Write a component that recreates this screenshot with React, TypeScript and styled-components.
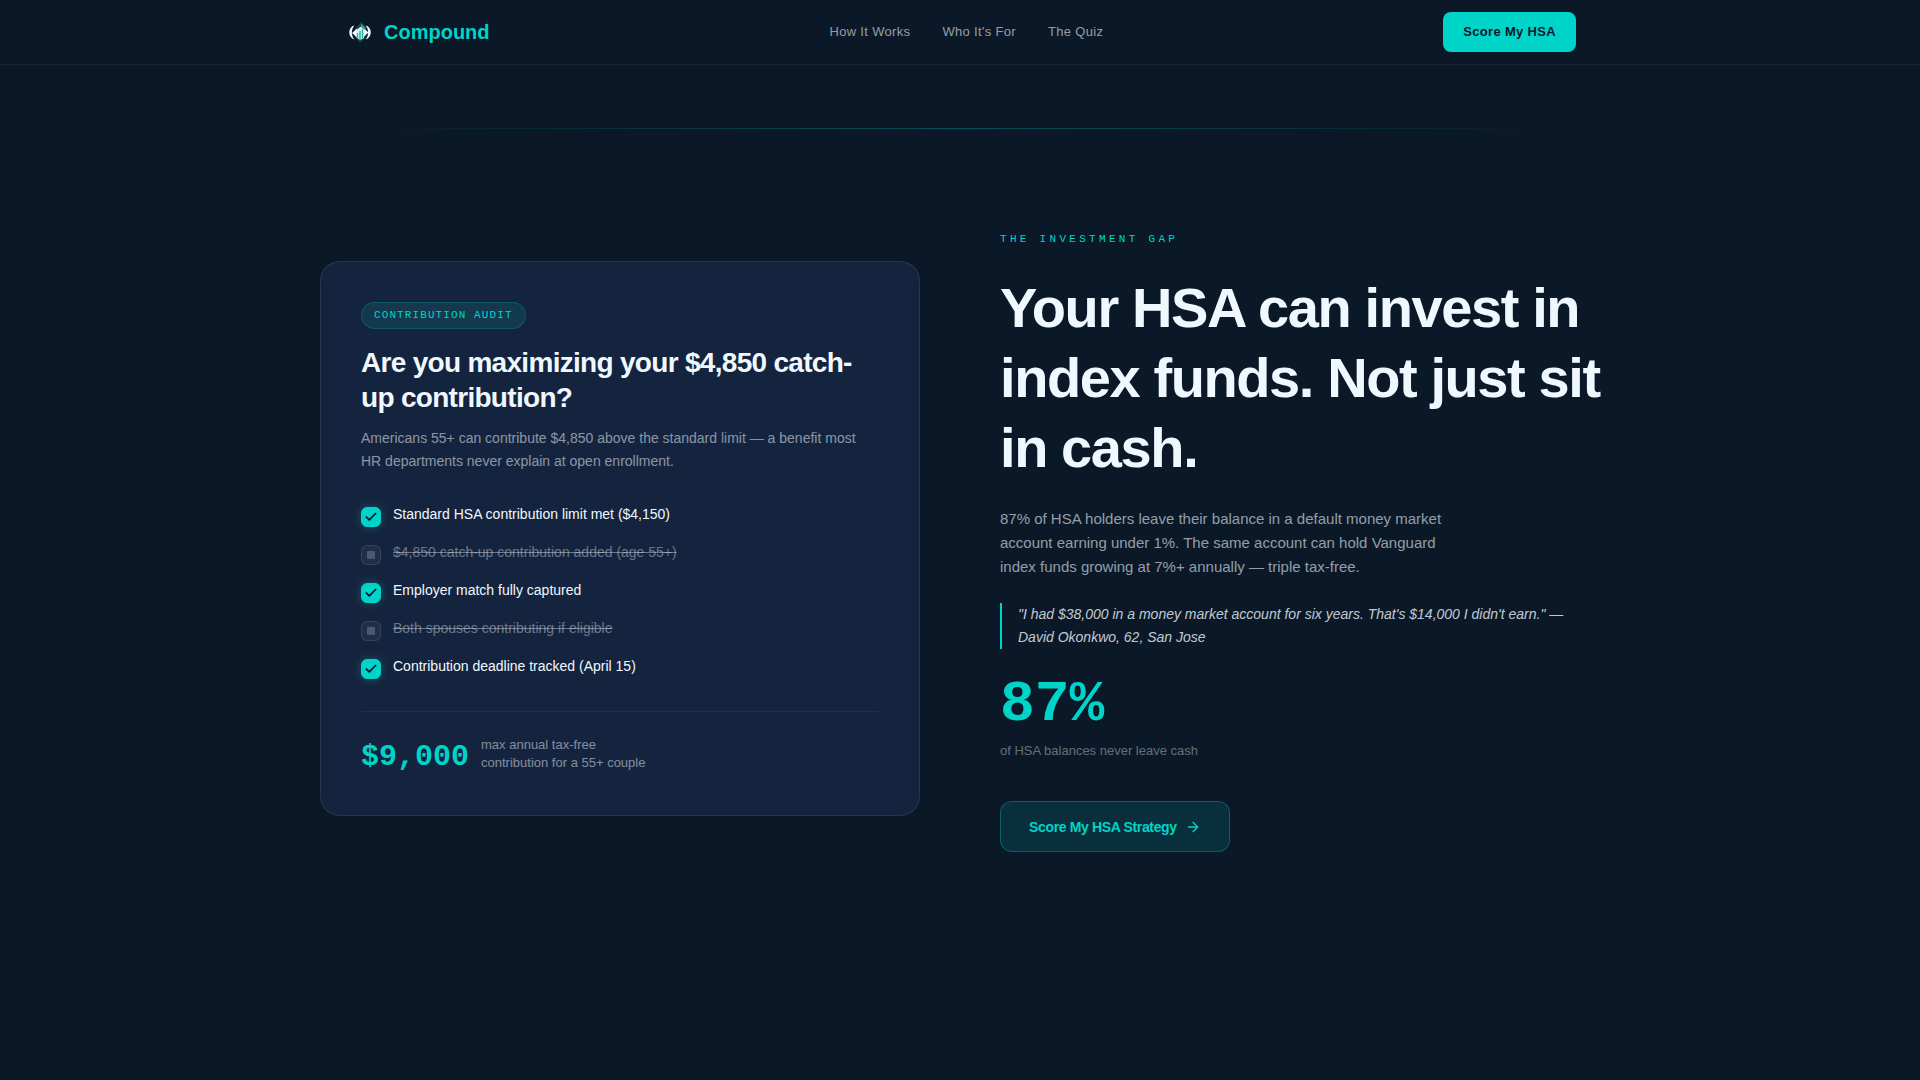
import React from "react";
import styled, { createGlobalStyle, css } from "styled-components";
import { ArrowRight, Check } from "lucide-react";

const color = {
  page: "#0a1828",
  card: "#15243e",
  teal: "#00d4c8",
  ink: "#f0f8ff",
};

const sans = '"Liberation Sans", Arial, sans-serif';
const mono = '"Liberation Mono", "Courier New", monospace';

const GlobalStyle = createGlobalStyle`
  *, *::before, *::after { box-sizing: border-box; }
  body {
    margin: 0;
    min-height: 100vh;
    background: ${color.page};
    color: ${color.ink};
    font-family: ${sans};
    -webkit-font-smoothing: antialiased;
  }
  h1, h2, p, ul, blockquote { margin: 0; padding: 0; }
`;

const Header = styled.header`
  border-bottom: 1px solid rgba(255, 255, 255, 0.06);
`;

const HeaderInner = styled.div`
  display: flex;
  align-items: center;
  justify-content: space-between;
  max-width: 1280px;
  height: 64px;
  margin: 0 auto;
  padding: 0 24px;
`;

const Brand = styled.a`
  display: flex;
  align-items: center;
  gap: 8px;
  color: ${color.teal};
  font-size: 20px;
  font-weight: 700;
  line-height: 32px;
  text-decoration: none;
`;

const Nav = styled.nav`
  display: flex;
  gap: 32px;
`;

const NavLink = styled.a`
  color: rgba(240, 248, 255, 0.6);
  font-size: 13px;
  line-height: 20px;
  letter-spacing: 0.025em;
  text-decoration: none;
`;

const HeaderButton = styled.button`
  height: 40px;
  padding: 0 20px;
  border: 0;
  border-radius: 8px;
  background: ${color.teal};
  color: ${color.page};
  font: 700 13px/20px ${sans};
  letter-spacing: 0.025em;
  cursor: pointer;
`;

const Divider = styled.hr`
  max-width: 1200px;
  height: 1px;
  margin: 63px auto 0;
  border: 0;
  background: linear-gradient(90deg, transparent, rgba(0, 212, 200, 0.3), transparent);
`;

const Section = styled.section`
  display: grid;
  grid-template-columns: 1fr 1fr;
  align-items: center;
  gap: 80px;
  max-width: 1280px;
  margin: 0 auto;
  padding: 96px 0;
`;

const Card = styled.article`
  padding: 40px;
  border: 1px solid rgba(255, 255, 255, 0.08);
  border-radius: 20px;
  background: ${color.card};
`;

const Badge = styled.span`
  display: inline-block;
  padding: 4px 12px;
  border: 1px solid rgba(0, 212, 200, 0.2);
  border-radius: 14px;
  background: rgba(0, 212, 200, 0.12);
  color: ${color.teal};
  font: 400 11px/17px ${mono};
  letter-spacing: 0.1em;
  text-transform: uppercase;
  vertical-align: top;
`;

const CardTitle = styled.h2`
  margin-top: 16px;
  font-size: 28px;
  font-weight: 700;
  line-height: 35px;
  letter-spacing: -0.025em;
`;

const CardText = styled.p`
  margin-top: 12px;
  color: rgba(240, 248, 255, 0.55);
  font-size: 14px;
  line-height: 23px;
`;

const List = styled.ul`
  display: flex;
  flex-direction: column;
  gap: 16px;
  margin-top: 32px;
  list-style: none;
`;

const Item = styled.label`
  display: flex;
  align-items: flex-start;
  gap: 12px;
`;

const Mark = styled.span`
  display: grid;
  place-items: center;
  margin-top: 2px;

  & > * {
    grid-area: 1 / 1;
  }

  svg {
    z-index: 1;
    pointer-events: none;
  }
`;

const Checkbox = styled.input`
  appearance: none;
  width: 20px;
  height: 20px;
  margin: 0;
  border: 1px solid rgba(255, 255, 255, 0.1);
  border-radius: 6px;
  background: rgba(255, 255, 255, 0.05);

  &:checked {
    border-color: ${color.teal};
    background: ${color.teal};
    box-shadow: 0 0 8px rgba(0, 212, 200, 0.3);
  }
`;

const ItemText = styled.span<{ $done: boolean }>`
  color: ${color.ink};
  font-size: 14px;
  line-height: 18px;
  ${(p) =>
    !p.$done &&
    css`
      color: rgba(240, 248, 255, 0.4);
      text-decoration: line-through;
    `}
`;

const CardFooter = styled.footer`
  display: flex;
  align-items: flex-start;
  gap: 12px;
  margin-top: 32px;
  padding-top: 24px;
  border-top: 1px solid rgba(255, 255, 255, 0.06);
`;

const Amount = styled.strong`
  margin-top: 4px;
  color: ${color.teal};
  font: 700 30px/35px ${mono};
`;

const AmountText = styled.span`
  max-width: 180px;
  color: rgba(240, 248, 255, 0.5);
  font-size: 13px;
  line-height: 18px;
`;

const Eyebrow = styled.p`
  color: ${color.teal};
  font: 400 11px/28px ${mono};
  letter-spacing: 0.3em;
  text-transform: uppercase;
`;

const Title = styled.h1`
  margin-top: 20px;
  font-size: 56px;
  font-weight: 700;
  line-height: 70px;
  letter-spacing: -0.025em;
`;

const Lead = styled.p`
  max-width: 460px;
  margin-top: 24px;
  color: rgba(240, 248, 255, 0.6);
  font-size: 15px;
  line-height: 24px;
`;

const Quote = styled.blockquote`
  margin-top: 24px;
  padding-left: 16px;
  border-left: 2px solid ${color.teal};
  color: rgba(240, 248, 255, 0.8);
  font-size: 14px;
  font-style: italic;
  line-height: 23px;
`;

const Stat = styled.p`
  margin-top: 24px;
  color: ${color.teal};
  font: 700 58px/64px ${mono};
`;

const StatText = styled.p`
  margin-top: 4px;
  color: rgba(240, 248, 255, 0.4);
  font-size: 13px;
  line-height: 20px;
`;

const Cta = styled.button`
  display: inline-flex;
  align-items: center;
  gap: 8px;
  height: 51px;
  margin-top: 40px;
  padding: 0 28px;
  border: 1px solid rgba(0, 212, 200, 0.3);
  border-radius: 12px;
  background: rgba(0, 212, 200, 0.12);
  color: ${color.teal};
  font: 700 14px/22px ${sans};
  letter-spacing: -0.025em;
  vertical-align: top;
  cursor: pointer;
`;

const Logo = () => (
  <svg width="32" height="32" viewBox="0 0 32 32" fill="none" aria-hidden="true">
    <path d="M17 6 22 11v10L16 27l-5-6v-8z" fill="#12474f" />
    <path d="M10.500 9.500C3.500 10.500 3.500 22 10.500 23.500 7 19.500 7 13.500 10.500 9.500z" fill="#f0f8ff" />
    <path d="M21.500 9.500c7 1 7 12.500 0 14 3.500-4 3.500-10 0-14z" fill="#f0f8ff" />
    <path d="M8 17 13 12.500v9z" fill="#f0f8ff" />
    <path d="M24.500 16.500 19.500 12v9z" fill="#f0f8ff" />
    <path d="M12.500 14 17 10.500l3 2.500v9l-4 2-3.500-2.500z" fill="#d9f3f3" />
    <path d="M13.500 17v5M16 15v9M18.500 13v9.500" stroke="#2bb5aa" strokeWidth="1.500" />
    <path d="m17 7.500 4.500 4v2.500L17 11z" fill="#1b9a96" />
  </svg>
);

const EmptyIcon = () => (
  <svg width="8" height="8" viewBox="0 0 8 8" aria-hidden="true">
    <rect width="8" height="8" rx="1" fill="#fff" fillOpacity="0.2" />
  </svg>
);

const links = [
  { label: "How It Works", href: "#how" },
  { label: "Who It's For", href: "#who" },
  { label: "The Quiz", href: "#quiz" },
];

const audit = [
  { text: "Standard HSA contribution limit met ($4,150)", done: true },
  { text: "$4,850 catch-up contribution added (age 55+)", done: false },
  { text: "Employer match fully captured", done: true },
  { text: "Both spouses contributing if eligible", done: false },
  { text: "Contribution deadline tracked (April 15)", done: true },
];

export default function App() {
  return (
    <>
      <GlobalStyle />
      <Header>
        <HeaderInner>
          <Brand href="#top">
            <Logo />
            Compound
          </Brand>
          <Nav>
            {links.map((l) => (
              <NavLink key={l.href} href={l.href}>
                {l.label}
              </NavLink>
            ))}
          </Nav>
          <HeaderButton type="button">Score My HSA</HeaderButton>
        </HeaderInner>
      </Header>
      <main>
        <Divider />
        <Section>
          <Card>
            <Badge>Contribution Audit</Badge>
            <CardTitle>Are you maximizing your $4,850 catch-up contribution?</CardTitle>
            <CardText>
              Americans 55+ can contribute $4,850 above the standard limit — a benefit most HR departments never explain
              at open enrollment.
            </CardText>
            <List>
              {audit.map((a) => (
                <li key={a.text}>
                  <Item>
                    <Mark>
                      <Checkbox type="checkbox" checked={a.done} readOnly />
                      {a.done ? <Check size={14} strokeWidth={3} color={color.page} /> : <EmptyIcon />}
                    </Mark>
                    <ItemText $done={a.done}>{a.text}</ItemText>
                  </Item>
                </li>
              ))}
            </List>
            <CardFooter>
              <Amount>$9,000</Amount>
              <AmountText>max annual tax-free contribution for a 55+ couple</AmountText>
            </CardFooter>
          </Card>
          <div>
            <Eyebrow>The Investment Gap</Eyebrow>
            <Title>Your HSA can invest in index funds. Not just sit in cash.</Title>
            <Lead>
              87% of HSA holders leave their balance in a default money market account earning under 1%. The same
              account can hold Vanguard index funds growing at 7%+ annually — triple tax-free.
            </Lead>
            <Quote>
              "I had $38,000 in a money market account for six years. That's $14,000 I didn't earn." — David Okonkwo,
              62, San Jose
            </Quote>
            <Stat>87%</Stat>
            <StatText>of HSA balances never leave cash</StatText>
            <Cta type="button">
              Score My HSA Strategy
              <ArrowRight size={16} strokeWidth={2} />
            </Cta>
          </div>
        </Section>
      </main>
    </>
  );
}
